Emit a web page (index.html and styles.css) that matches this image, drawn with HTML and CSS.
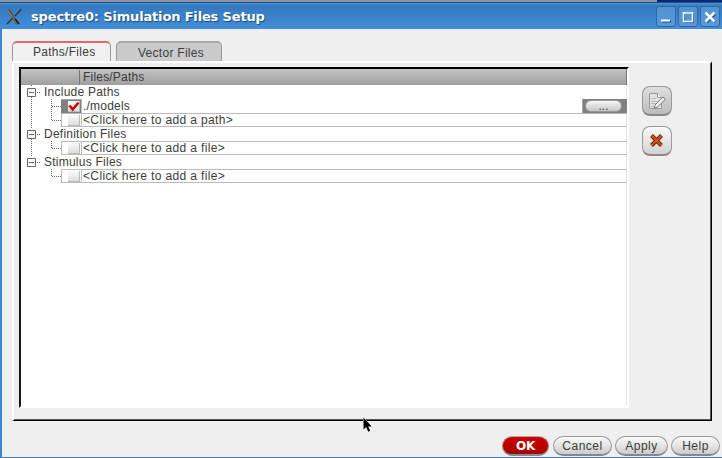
FILE: index.html
```html
<!DOCTYPE html>
<html lang="en">
<head>
<meta charset="utf-8">
<title>spectre0: Simulation Files Setup</title>
<link rel="stylesheet" href="styles.css">
</head>
<body>
<div class="backdrop"><i></i><b></b></div>
<header class="titlebar">
  <svg class="app-icon" width="17" height="18" viewBox="0 0 17 18"><path d="M0 1.500h4l9 14-3 1z" fill="#57544d"/><path d="M1 1.500l10 14" stroke="#96938a"/><path d="M15.500 1L9 8M7 10L1 16" stroke="#3a332e" stroke-width="1.500"/><path d="M9 11l4 5" stroke="#222" stroke-width="2"/></svg>
  <h1>spectre0: Simulation Files Setup</h1>
  <div class="winbtns">
    <button><svg width="20" height="20"><path d="M6 14.500h9" stroke="#235087" stroke-width="2"/><path d="M5 13.500h9" stroke="#fff" stroke-width="2"/></svg></button>
    <button><svg width="20" height="20"><path d="M6.500 6.500h9v9h-9z" fill="none" stroke="#235087"/><path d="M5 6h10M5.500 5v10M14.500 5v10M5 14.500h10" fill="none" stroke="#fff" stroke-width="1.500"/></svg></button>
    <button><svg width="20" height="20"><path d="M7 7l8 8M15 7l-8 8" stroke="#235087" stroke-width="2.500"/><path d="M5.500 5.500l9 9M14.500 5.500l-9 9" stroke="#fff" stroke-width="2.500"/></svg></button>
  </div>
</header>
<main class="dialog">
  <nav class="tabs"><div class="tab active"><span>Paths/Files</span></div><div class="tab"><span>Vector Files</span></div></nav>
  <section class="panel">
    <div class="list">
      <div class="list-head"><span>Files/Paths</span></div>
      <div class="row"><svg class="tree" width="23" height="14"><path d="M10.500 0v2M10.500 12v2M16 7.500h4" class="dots"/><path d="M6.500 3.500h8v8h-8zM8 7.500h5" class="box"/></svg><span class="group">Include Paths</span></div>
      <div class="row"><svg class="tree" width="40" height="14"><path d="M10.500 0v14M30.500 0v14M31 7.500h9" class="dots"/></svg>
        <div class="cell selected"><div class="check"><i><svg width="12" height="11"><path d="M1.500 4.500l3.200 4L10.500 1.500" fill="none" stroke="#cf0007" stroke-width="2.600"/></svg></i></div><span class="value">./models</span><div class="browse"><span>...</span></div></div></div>
      <div class="row"><svg class="tree" width="40" height="14"><path d="M10.500 0v14M30.500 0v7M31 7.500h9" class="dots"/></svg>
        <div class="cell"><div class="check"><i></i></div><span class="value">&lt;Click here to add a path&gt;</span></div></div>
      <div class="row"><svg class="tree" width="23" height="14"><path d="M10.500 0v2M10.500 12v2M16 7.500h4" class="dots"/><path d="M6.500 3.500h8v8h-8zM8 7.500h5" class="box"/></svg><span class="group">Definition Files</span></div>
      <div class="row"><svg class="tree" width="40" height="14"><path d="M10.500 0v14M30.500 0v7M31 7.500h9" class="dots"/></svg>
        <div class="cell"><div class="check"><i></i></div><span class="value">&lt;Click here to add a file&gt;</span></div></div>
      <div class="row"><svg class="tree" width="23" height="14"><path d="M10.500 0v2M16 7.500h4" class="dots"/><path d="M6.500 3.500h8v8h-8zM8 7.500h5" class="box"/></svg><span class="group">Stimulus Files</span></div>
      <div class="row"><svg class="tree" width="40" height="14"><path d="M30.500 0v7M31 7.500h9" class="dots"/></svg>
        <div class="cell"><div class="check"><i></i></div><span class="value">&lt;Click here to add a file&gt;</span></div></div>
    </div>
    <aside class="tools">
      <button class="tool disabled"><svg width="18" height="18"><path d="M1.500 1.500h8l4 4v11h-12z" fill="#e2e2e2" stroke="#999"/><path d="M9.500 1.500v4h4" fill="#fff" stroke="#999"/><path d="M3 6.500h5M3 9.500h8M3 11.500h6M3 14.500h3" stroke="#bbb"/><path d="M6 16.500l1-3.500 8-8 2.500 2-8 8z" fill="#f2f2f2" stroke="#777"/></svg></button>
      <button class="tool"><svg width="14" height="14"><path d="M1.500 1.500l10 10M11.500 1.500l-10 10" stroke="#5e1e02" stroke-width="4"/><path d="M1.500 1.500l10 10M11.500 1.500l-10 10" stroke="#cc4f10" stroke-width="2.200"/><path d="M2 1.500l9.500 9.500M11 1.500L1.500 11" stroke="#ee8245" stroke-width=".7" stroke-dasharray="1 1"/></svg></button>
    </aside>
  </section>
  <footer class="actions"><button class="pill ok">OK</button><button class="pill cancel">Cancel</button><button class="pill apply">Apply</button><button class="pill help">Help</button></footer>
</main>
<svg class="cursor" width="9" height="15" viewBox="0 0 9 15"><path d="M.5 .500v12l2.700-2.500 2 4.700 2-1-2-4.200h3.500z" fill="#000" stroke="#fff" stroke-width=".8" paint-order="stroke"/></svg>
</body>
</html>
```
FILE: styles.css
```css
* { box-sizing: border-box; }
html, body { margin: 0; height: 458px; overflow: hidden; }
body { width: 722px; background: #efefef; font: 12px/14px "Liberation Sans", Arial, sans-serif; color: #3c3c3c; }
button { padding: 0; border: 0; font: inherit; color: inherit; display: flex; align-items: center; justify-content: center; }
svg { display: block; flex: none; }
.backdrop { height: 3px; display: flex; border-bottom: 1px solid #27517c; background: #8795a5; }
.backdrop i { width: 657px; }
.backdrop b { flex: 1; background: #07277a; }
.titlebar { height: 26px; display: flex; align-items: center; padding: 0 2px 0 6px; background: linear-gradient(#4a92da 0, #3579be 3px, #3b83cc 55%, #438edc); }
.app-icon { margin-top: 1px; }
h1 { margin: 2px 0 0 8px; flex: 1; font: bold 13px/18px "DejaVu Sans", sans-serif; letter-spacing: -.16px; color: #fff; text-shadow: 1px 1px 1px #1c4a7d; white-space: nowrap; }
.winbtns { display: flex; gap: 2px; margin-top: 1px; }
.winbtns button { width: 20px; height: 21px; border: 1px solid #30679f; border-radius: 3px; background: linear-gradient(#5292d4, #5799de); }
.dialog { height: 429px; border-left: 2px solid #3c86d1; border-bottom: 1px solid #3b82c8; padding-top: 12px; }
.tabs { height: 20px; display: flex; gap: 5px; padding-left: 10px; }
.tab { width: 106px; height: 20px; border: 1px solid #999; border-top: 2px solid #aaa; border-bottom: 0; border-radius: 5px 5px 0 0; background: #cacaca; line-height: 20px; padding-left: 21px; }
.tab.active { width: 99px; background: #f1f1f1; border-top-color: #e06b6b; padding-left: 20px; line-height: 18px; }
.tab span { white-space: nowrap; letter-spacing: .28px; }
.panel { width: 700px; height: 360px; margin-left: 10px; display: flex; padding: 4px 0 0 5px; border: 2px solid; border-color: #fff #000 #000 #fff; border-right-width: 1px; border-bottom-width: 1px; box-shadow: inset -1px -1px #555; }
.list { width: 610px; height: 341px; background: #fff; border: 2px solid; border-color: #000 #fff #fff #000; border-left-color: #161616; box-shadow: inset -1px 0 #e4e4e4; }
.list-head { width: 606px; height: 16px; padding: 1px 0 0 58px; background: linear-gradient(#c4c4c4, #9f9f9f); border-right: 1px solid #777; }
.list-head span { display: block; border-left: 1px solid #777; padding-left: 3px; height: 15px; letter-spacing: .2px; }
.row { height: 14px; display: flex; width: 606px; }
.dots { fill: none; stroke: #666; stroke-dasharray: 1 1; }
.box { fill: none; stroke: #666; }
.group { letter-spacing: .24px; white-space: nowrap; }
.cell { flex: 1; display: flex; border-left: 1px solid #bbb; box-shadow: inset 0 -1px #bbb; }
.row:nth-child(4) .cell, .row:nth-child(6) .cell, .row:nth-child(8) .cell { border-top: 1px solid #bbb; line-height: 12px; }
.check { width: 20px; display: flex; padding: 1px 0 0 6px; border-right: 1px solid #bbb; }
.check i { width: 12px; height: 11px; background: linear-gradient(#fafafa, #ddd); border: solid #bbb; border-width: 0 1px 1px 0; }
.selected { border: 0; box-shadow: none; }
.selected .check { background: #808080; border-top: 1px solid #aaa; width: 21px; padding-left: 7px; }
.value { flex: 1; padding-left: 1px; letter-spacing: .36px; white-space: nowrap; }
.selected .value { letter-spacing: .2px; }
.browse { width: 45px; background: #808080; border-left: 1px solid #aaa; padding: 1px 0 0 2px; }
.browse span { display: block; width: 37px; height: 12px; border-radius: 7px; border: 1px solid #999; background: linear-gradient(#f5f5f5, #c7c7c7); line-height: 10px; text-align: center; letter-spacing: 0; }
.tools { padding: 19px 0 0 13px; display: grid; align-content: start; gap: 10px; }
.tool { width: 30px; height: 30px; border: 1px solid #999; border-bottom: 2px solid #888; border-radius: 8px; background: linear-gradient(#fafafa, #d2d2d2); }
.disabled { background: linear-gradient(#dedede, #bcbcbc); }
.actions { display: flex; justify-content: flex-end; gap: 3px; padding: 15px 2px 0 0; }
.pill { height: 20px; border-radius: 10px; border: 1px solid #999; border-bottom: 2px solid #888; background: linear-gradient(#fbfbfb, #ccc); letter-spacing: .5px; }
.ok { width: 47px; margin-right: 1px; color: #fff; font: bold 12px/16px "DejaVu Sans", sans-serif; letter-spacing: -.3px; background: linear-gradient(#d00000, #a80000); border-color: #aaa #aa7777 #888; }
.cancel { width: 59px; }
.apply { width: 53px; }
.help { width: 49px; }
.cursor { position: absolute; left: 363px; top: 417px; overflow: visible; }
```
